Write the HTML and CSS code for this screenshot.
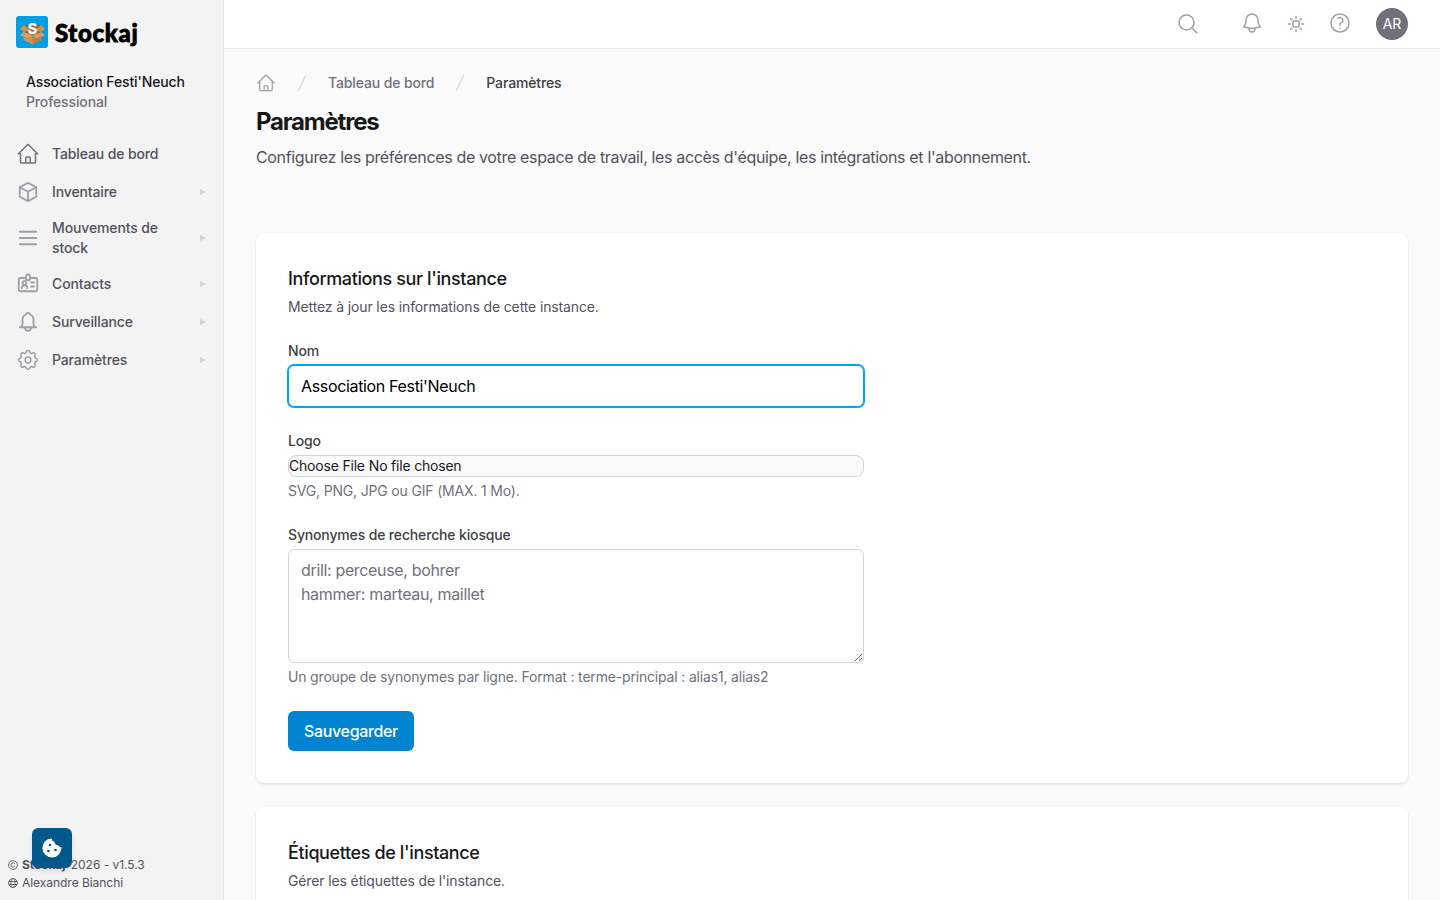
FILE: index.html
```html
<!DOCTYPE html>
<html lang="fr">
  <head>
    <meta charset="utf-8">
    <title>Paramètres - Stockaj</title>
    <link rel="stylesheet" href="styles.css">
  </head>
  <body>
    <aside class="sidebar">
      <a class="brand" href="#">
        <svg class="brand-logo" viewBox="0 0 32 32">
          <rect width="32" height="32" rx="3" fill="#039fe3"/>
          <path d="M7.500 16l9 3 9-3v8l-9 4.500-9-4.500z" fill="#c6965a"/>
          <path d="M16.500 19l9-3v8l-9 4.500z" fill="#b38249"/>
          <path d="M8 9.500l8.500-1.500 8.500 1.500v7L16.500 20 8 16.500z" fill="#8d6239"/>
          <path d="M8 9L4 13l4 3 6-2zM25 9l4 4-4 3-6-2z" fill="#c6965a"/>
          <path d="M7.500 16l9 3-3.500 3.500-9-3zM25.500 16l-9 3 3.500 3.500 9-3z" fill="#d0a064"/>
          <text class="brand-letter" x="16.500" y="18" text-anchor="middle">S</text>
        </svg>
        <span class="brand-name">Stockaj</span>
      </a>
      <div class="account">
        <div class="account-name">Association Festi'Neuch</div>
        <div class="account-plan">Professional</div>
      </div>
      <nav class="menu">
        <a class="menu-item" href="#">
          <svg class="icon icon-home" viewBox="0 0 24 24"><path d="M2.250 12l8.954-8.955c.44-.439 1.152-.439 1.591 0L21.750 12M4.500 9.750v10.125c0 .621.504 1.125 1.125 1.125H9.750v-4.875c0-.621.504-1.125 1.125-1.125h2.250c.621 0 1.125.504 1.125 1.125V21h4.125c.621 0 1.125-.504 1.125-1.125V9.750M8.250 21h8.250"/></svg>
          <span class="menu-label">Tableau de bord</span>
        </a>
        <a class="menu-item" href="#">
          <svg class="icon" viewBox="0 0 24 24"><path d="M20.250 7.250L12 2.900 3.750 7.250m16.500 0L12 11.750m8.250-4.500v9.500L12 21.100M3.750 7.250L12 11.750M3.750 7.250v9.500L12 21.100m0-9.350v9.350"/></svg>
          <span class="menu-label">Inventaire</span>
          <svg class="arrow" viewBox="0 0 6 6"><path d="M0 0l6 3-6 3z"/></svg>
        </a>
        <a class="menu-item" href="#">
          <svg class="icon" viewBox="0 0 24 24"><path d="M3.750 5.750h16.500M3.750 12h16.500M3.750 18.250h16.500"/></svg>
          <span class="menu-label">Mouvements de stock</span>
          <svg class="arrow" viewBox="0 0 6 6"><path d="M0 0l6 3-6 3z"/></svg>
        </a>
        <a class="menu-item" href="#">
          <svg class="icon" viewBox="0 0 24 24"><path d="M9.750 6H4.500A1.750 1.750 0 0 0 2.750 7.750v9.750a1.750 1.750 0 0 0 1.750 1.750h15a1.750 1.750 0 0 0 1.750-1.750V7.750A1.750 1.750 0 0 0 19.500 6h-5.250M10 4.500a2 2 0 0 1 4 0v1.750a2 2 0 0 1-4 0zM15 10.500h3M15 14.500h3M5.750 16c0-3.500 5.500-3.500 5.500 0"/><circle cx="8.500" cy="11" r="1.800"/></svg>
          <span class="menu-label">Contacts</span>
          <svg class="arrow" viewBox="0 0 6 6"><path d="M0 0l6 3-6 3z"/></svg>
        </a>
        <a class="menu-item" href="#">
          <svg class="icon" viewBox="0 0 24 24"><path d="M3.750 17.250h16.500M5.250 17c1-1 1.250-2 1.250-3.500V9.500c0-2.500 1.500-4.250 3.500-5 .3-2.200 3.700-2.200 4 0 2 .75 3.500 2.500 3.500 5v4c0 1.500.25 2.500 1.250 3.500M9 17.500c0 4.500 6 4.500 6 0"/></svg>
          <span class="menu-label">Surveillance</span>
          <svg class="arrow" viewBox="0 0 6 6"><path d="M0 0l6 3-6 3z"/></svg>
        </a>
        <a class="menu-item" href="#">
          <svg class="icon icon-cog" viewBox="0 0 24 24"><path d="M10.130 3.910A2 2 0 0 1 13.870 3.910A1.500 1.500 0 0 0 16.400 4.960A2 2 0 0 1 19.040 7.600A1.500 1.500 0 0 0 20.090 10.130A2 2 0 0 1 20.090 13.870A1.500 1.500 0 0 0 19.040 16.400A2 2 0 0 1 16.400 19.040A1.500 1.500 0 0 0 13.870 20.090A2 2 0 0 1 10.130 20.090A1.500 1.500 0 0 0 7.600 19.040A2 2 0 0 1 4.960 16.400A1.500 1.500 0 0 0 3.910 13.870A2 2 0 0 1 3.910 10.130A1.500 1.500 0 0 0 4.960 7.600A2 2 0 0 1 7.600 4.960A1.500 1.500 0 0 0 10.130 3.910z"/><circle cx="12" cy="12" r="2.900"/></svg>
          <span class="menu-label">Paramètres</span>
          <svg class="arrow" viewBox="0 0 6 6"><path d="M0 0l6 3-6 3z"/></svg>
        </a>
      </nav>
      <footer class="sidebar-footer">
        <div class="footer-line">
          <svg class="footer-icon" viewBox="0 0 12 12"><circle cx="6" cy="6" r="5.300"/><path d="M8 7.500a2.500 2.500 0 1 1 0-3"/></svg>
          <span><b>Stockaj</b> 2026 - v1.5.3</span>
        </div>
        <div class="footer-line">
          <svg class="footer-icon" viewBox="0 0 12 12"><circle cx="6" cy="6" r="5.300"/><ellipse cx="6" cy="6" rx="2.500" ry="5.300"/><path d="M1 4.200h10M1 7.800h10"/></svg>
          <span>Alexandre Bianchi</span>
        </div>
      </footer>
    </aside>

    <div class="page">
      <header class="topbar">
        <svg class="icon search" viewBox="0 0 24 24"><path d="M21 21l-5.197-5.197m0 0A7.500 7.500 0 1 0 5.196 5.196a7.500 7.500 0 0 0 10.607 10.607z"/></svg>
        <svg class="icon raised" viewBox="0 0 24 24"><path d="M14.857 17.082a23.848 23.848 0 0 0 5.454-1.310A8.967 8.967 0 0 1 18 9.750V9A6 6 0 0 0 6 9v.75a8.967 8.967 0 0 1-2.312 6.022c1.733.64 3.560 1.085 5.455 1.310m5.714 0a24.255 24.255 0 0 1-5.714 0m5.714 0a3 3 0 1 1-5.714 0"/></svg>
        <svg class="icon" viewBox="0 0 24 24"><circle cx="12" cy="12" r="3.300"/><path d="M12 4.500v1.750M12 17.750v1.750M4.500 12h1.750M17.750 12h1.750M6.700 6.700l1.200 1.200M16.100 16.100l1.200 1.200M6.700 17.300l1.200-1.200M16.100 7.900l1.200-1.200"/></svg>
        <svg class="icon raised" viewBox="0 0 24 24"><path d="M9.879 7.519c1.171-1.025 3.071-1.025 4.242 0 1.172 1.025 1.172 2.687 0 3.712-.203.179-.43.326-.67.442-.745.361-1.450.999-1.450 1.827v.75M21 12a9 9 0 1 1-18 0 9 9 0 0 1 18 0zm-9 5.250h.008v.008H12z"/></svg>
        <div class="avatar">AR</div>
      </header>

      <main class="content">
        <nav class="breadcrumb">
          <svg class="icon crumb-icon" viewBox="0 0 24 24"><path d="M2.250 12l8.954-8.955c.44-.439 1.152-.439 1.591 0L21.750 12M4.500 9.750v10.125c0 .621.504 1.125 1.125 1.125H9.750v-4.875c0-.621.504-1.125 1.125-1.125h2.250c.621 0 1.125.504 1.125 1.125V21h4.125c.621 0 1.125-.504 1.125-1.125V9.750M8.250 21h8.250"/></svg>
          <svg class="slash" viewBox="0 0 20 20"><path d="M5.555 17.776l8-16 .894.448-8 16-.894-.448z"/></svg>
          <a href="#">Tableau de bord</a>
          <svg class="slash" viewBox="0 0 20 20"><path d="M5.555 17.776l8-16 .894.448-8 16-.894-.448z"/></svg>
          <span class="current">Paramètres</span>
        </nav>
        <h1>Paramètres</h1>
        <p class="lead">Configurez les préférences de votre espace de travail, les accès d'équipe, les intégrations et l'abonnement.</p>

        <section class="card">
          <h2>Informations sur l'instance</h2>
          <p class="card-intro">Mettez à jour les informations de cette instance.</p>
          <form class="form">
            <div class="field">
              <label for="name">Nom</label>
              <input id="name" class="input active" type="text" value="Association Festi'Neuch">
            </div>
            <div class="field">
              <label for="logo">Logo</label>
              <input id="logo" class="file" type="file">
              <p class="help">SVG, PNG, JPG ou GIF (MAX. 1 Mo).</p>
            </div>
            <div class="field">
              <label for="synonyms">Synonymes de recherche kiosque</label>
              <textarea id="synonyms" class="input" rows="4" placeholder="drill: perceuse, bohrer&#10;hammer: marteau, maillet"></textarea>
              <p class="help">Un groupe de synonymes par ligne. Format : terme-principal : alias1, alias2</p>
            </div>
            <button class="save" type="button">Sauvegarder</button>
          </form>
        </section>

        <section class="card">
          <h2>Étiquettes de l'instance</h2>
          <p class="card-intro">Gérer les étiquettes de l'instance.</p>
        </section>
      </main>
    </div>

    <button class="cookie" type="button" aria-label="Cookies">
      <svg viewBox="0 0 20 20"><path d="M9.500.5A9.500 9.500 0 1 0 19.400 9.300 4 4 0 0 1 16 7.300a4 4 0 0 1-3.600-3.600A4 4 0 0 1 9.500.5z" fill="#fff"/><g fill="#00598a"><circle cx="8" cy="7" r="1.300"/><circle cx="6.500" cy="13" r="1.300"/><circle cx="13.500" cy="12" r="1.300"/></g></svg>
    </button>
  </body>
</html>
```
FILE: styles.css
```css
:root {
  --border: #e4e4e7;
  --text: #18181b;
  --text-mid: #52525c;
  --text-light: #71717b;
  --muted: #9f9fa9;
  --primary: #0084d1;
}

* {
  box-sizing: border-box;
}

html,
body {
  height: 100%;
  margin: 0;
}

body {
  display: flex;
  overflow: hidden;
  background: #fafafa;
  color: var(--text);
  font-family: Inter, "Liberation Sans", sans-serif;
  font-size: 14px;
  line-height: 20px;
  letter-spacing: -0.13px;
}

h1,
h2,
p {
  margin: 0;
}

a {
  color: inherit;
  text-decoration: none;
}

svg {
  display: block;
  flex-shrink: 0;
}

.icon {
  width: 24px;
  height: 24px;
  fill: none;
  stroke: var(--muted);
  stroke-width: 1.5;
  stroke-linecap: round;
  stroke-linejoin: round;
}

/* Sidebar */
.sidebar {
  display: flex;
  flex-direction: column;
  flex-shrink: 0;
  width: 224px;
  background: #f3f3f3;
  border-right: 1px solid var(--border);
}

.brand {
  display: flex;
  align-items: center;
  gap: 7px;
  padding: 16px 16px 0;
}

.brand-logo {
  width: 32px;
  height: 32px;
}

.brand-letter {
  fill: #fff;
  font-size: 15px;
  font-weight: 800;
}

.brand-name {
  padding-top: 1px;
  color: #000;
  font-family: Lato, sans-serif;
  font-size: 24px;
  font-weight: 900;
  line-height: 31px;
  letter-spacing: 0.65px;
  -webkit-text-stroke: 0.8px #000;
}

.account {
  padding: 24px 26px 0;
  font-weight: 500;
}

.account-plan {
  color: var(--text-light);
}

.menu {
  padding: 23px 16px 0;
}

.menu-item {
  display: flex;
  align-items: center;
  gap: 12px;
  padding: 7px 0;
  color: var(--text-mid);
  font-weight: 500;
}

.menu-item .icon {
  stroke-width: 1.8;
}

.menu-item .icon-home {
  stroke: var(--text-light);
  stroke-width: 1.5;
}

.menu-item .icon-cog {
  stroke-width: 1.5;
}

.menu-label {
  flex: 1;
  padding-right: 12px;
}

.arrow {
  width: 6px;
  height: 6px;
  margin-right: 1px;
  fill: #d4d4d8;
}

.sidebar-footer {
  margin-top: auto;
  padding: 0 8px 8px;
  color: var(--text-mid);
  font-size: 12px;
  line-height: 18px;
  letter-spacing: -0.04px;
}

.sidebar-footer b {
  margin-right: 2px;
}

.footer-line {
  display: flex;
  align-items: center;
  gap: 4px;
}

.footer-icon {
  width: 10px;
  height: 10px;
  fill: none;
  stroke: var(--text-mid);
}

.cookie {
  position: fixed;
  left: 32px;
  bottom: 32px;
  display: flex;
  align-items: center;
  justify-content: center;
  width: 40px;
  height: 40px;
  padding: 0;
  border: 0;
  border-radius: 6px;
  background: #00598a;
  box-shadow: 0 4px 6px -1px rgba(0, 0, 0, 0.1), 0 2px 4px -2px rgba(0, 0, 0, 0.1);
}

.cookie svg {
  width: 20px;
  height: 20px;
}

/* Top bar */
.page {
  flex: 1;
  min-width: 0;
}

.topbar {
  display: flex;
  align-items: center;
  justify-content: flex-end;
  gap: 20px;
  height: 49px;
  padding: 0 32px 1px;
  border-bottom: 1px solid #ececee;
  background: #fff;
}

.search {
  margin-right: 20px;
}

.raised {
  margin-bottom: 2px;
}

.avatar {
  width: 32px;
  height: 32px;
  margin-left: 4px;
  border-radius: 50%;
  background: var(--text-light);
  color: #fff;
  line-height: 32px;
  text-align: center;
}

/* Content */
.content {
  padding: 24px 32px 0;
}

.breadcrumb {
  display: flex;
  align-items: center;
  gap: 16px;
  color: var(--text-light);
  font-weight: 500;
}

.crumb-icon {
  width: 20px;
  height: 20px;
}

.slash {
  width: 20px;
  height: 20px;
  fill: #d4d4d8;
}

.current {
  color: #3f3f46;
}

h1 {
  margin-top: 13px;
  font-size: 24px;
  font-weight: 700;
  line-height: 32px;
  letter-spacing: -1.2px;
}

.lead {
  margin: 7px 0 64px;
  color: var(--text-mid);
  font-size: 16px;
  line-height: 24px;
  letter-spacing: -0.345px;
}

.card {
  margin-bottom: 24px;
  padding: 32px;
  border-radius: 8px;
  background: #fff;
  box-shadow: 0 1px 3px rgba(0, 0, 0, 0.1), 0 1px 2px -1px rgba(0, 0, 0, 0.1);
}

h2 {
  font-size: 18px;
  font-weight: 500;
  line-height: 28px;
  letter-spacing: -0.38px;
}

.card-intro {
  margin-top: 4px;
  color: var(--text-mid);
}

/* Form */
.form {
  width: 576px;
  margin-top: 24px;
}

.field {
  margin-bottom: 24px;
}

label {
  display: block;
  margin-bottom: 4px;
  color: #3f3f46;
  font-weight: 500;
  letter-spacing: -0.15px;
}

.input {
  display: block;
  width: 100%;
  padding: 8px 12px;
  border: 1px solid #d4d4d8;
  border-radius: 6px;
  background: #fff;
  color: #000;
  font: inherit;
  font-size: 16px;
  line-height: 24px;
  letter-spacing: -0.34px;
}

input.input {
  height: 42px;
}

.input::placeholder {
  color: var(--text-light);
}

.input.active {
  border-color: #00a6f4;
  box-shadow: 0 0 0 1px #00a6f4;
}

.file {
  display: block;
  width: 100%;
  height: 22px;
  border: 1px solid #d4d4d8;
  border-radius: 8px;
  background: #fafafa;
  font: inherit;
  letter-spacing: -0.2px;
}

.file::file-selector-button {
  padding: 0;
  border: 0;
  background: transparent;
  color: inherit;
  font: inherit;
  letter-spacing: inherit;
}

.help {
  margin-top: 4px;
  color: var(--text-light);
  letter-spacing: -0.175px;
}

.save {
  display: block;
  height: 40px;
  padding: 0 16px;
  border: 0;
  border-radius: 6px;
  background: var(--primary);
  color: #fff;
  font: inherit;
  font-size: 16px;
  font-weight: 500;
  letter-spacing: -0.34px;
}
```
